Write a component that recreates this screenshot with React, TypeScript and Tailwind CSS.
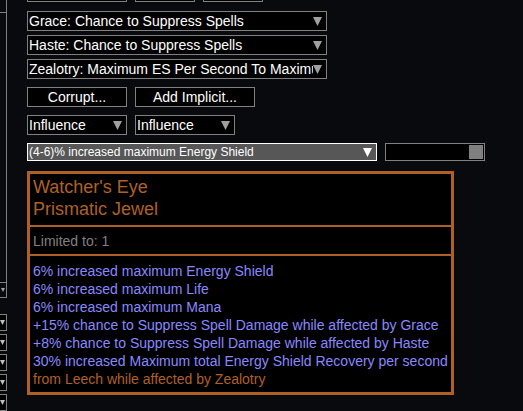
import React from 'react';

const ORANGE = 'text-[#af6025]';

function Arrow({ color = '#a0a0a0' }: { color?: string }) {
  return (
    <svg width="9" height="9" viewBox="0 0 9 9" className="shrink-0">
      <polygon points="0,0 9,0 4.5,9" fill={color} />
    </svg>
  );
}

function Dropdown({ label, className }: { label: string; className: string }) {
  return (
    <div
      className={`h-[20px] border border-[#808080] bg-black flex items-center pl-px pr-[4px] text-[14px] leading-[18px] text-white ${className}`}
    >
      <span className="flex-1 overflow-hidden whitespace-nowrap">{label}</span>
      <Arrow />
    </div>
  );
}

function Button({ label, className }: { label: string; className: string }) {
  return (
    <div
      className={`h-[20px] border border-[#808080] bg-black flex items-center justify-center text-[14px] leading-[18px] text-white ${className}`}
    >
      {label}
    </div>
  );
}

function SideStrip() {
  const boxes = [0, 1, 2, 3, 4];
  return (
    <div className="w-[7px] shrink-0 overflow-hidden flex flex-col">
      <div className="-ml-[24px] w-[31px] h-[311px] border border-t-0 border-[#808080] flex flex-col">
        <div className="h-[12px]" />
        <div className="h-px bg-[#808080]" />
        <div className="flex-1" />
        <div className="h-px bg-[#808080]" />
        <div className="h-[14px] flex items-center justify-end pr-[1px]">
          <svg width="4" height="4" viewBox="0 0 4 4">
            <polygon points="0,0 4,0 2,4" fill="#a0a0a0" />
          </svg>
        </div>
      </div>
      <div className="mt-[16px] flex flex-col gap-[3px]">
        {boxes.map((b) => (
          <div
            key={b}
            className="-ml-[24px] w-[31px] h-[17px] border border-[#808080] bg-black flex items-center justify-end pr-[1px]"
          >
            <svg width="5" height="5" viewBox="0 0 5 5">
              <polygon points="0,0 5,0 2.5,5" fill="#c0c0c0" />
            </svg>
          </div>
        ))}
      </div>
    </div>
  );
}

const mods = [
  '6% increased maximum Energy Shield',
  '6% increased maximum Life',
  '6% increased maximum Mana',
  '+15% chance to Suppress Spell Damage while affected by Grace',
  '+8% chance to Suppress Spell Damage while affected by Haste',
  '30% increased Maximum total Energy Shield Recovery per second',
];

function Tooltip() {
  return (
    <div className="w-[427px] h-[224px] border-[3px] border-[#af6025] bg-black flex flex-col">
      <div className={`pl-[3px] pt-[2px] pb-[5px] text-[18px] leading-[22px] ${ORANGE}`}>
        <div>Watcher's Eye</div>
        <div>Prismatic Jewel</div>
      </div>
      <div className="h-[2px] bg-[#af6025]" />
      <div className="pl-[3px] pt-[5px] pb-[4px] text-[14px] leading-[18px] text-[#808080]">
        Limited to: 1
      </div>
      <div className="h-[2px] bg-[#af6025]" />
      <div className="pl-[3px] pt-[6px] text-[14px] leading-[18px] whitespace-nowrap">
        {mods.map((m) => (
          <div key={m} className="text-[#8888ff]">
            {m}
          </div>
        ))}
        <div className={ORANGE}>from Leech while affected by Zealotry</div>
      </div>
    </div>
  );
}

export default function App() {
  return (
    <div className="w-[523px] h-[411px] overflow-hidden bg-[#090a0d] flex font-['Liberation_Sans',Arial,sans-serif]">
      <SideStrip />
      <div className="ml-[20px] flex flex-col">
        <div className="-mt-[18px] flex gap-[8px]">
          <Button label="" className="w-[100px]" />
          <Button label="" className="w-[60px]" />
          <Button label="" className="w-[60px]" />
        </div>

        <div className="mt-[9px] flex flex-col gap-[4px]">
          <Dropdown label="Grace: Chance to Suppress Spells" className="w-[300px]" />
          <Dropdown label="Haste: Chance to Suppress Spells" className="w-[300px]" />
          <Dropdown label="Zealotry: Maximum ES Per Second To Maximum" className="w-[300px]" />
        </div>

        <div className="mt-[8px] flex gap-[8px]">
          <Button label="Corrupt..." className="w-[100px]" />
          <Button label="Add Implicit..." className="w-[120px]" />
        </div>

        <div className="mt-[8px] flex gap-[8px]">
          <Dropdown label="Influence" className="w-[100px]" />
          <Dropdown label="Influence" className="w-[100px]" />
        </div>

        <div className="mt-[8px] flex gap-[8px]">
          <div className="w-[350px] h-[18px] border border-white bg-[#575757] flex items-center pl-px pr-[4px] text-[12px] leading-[16px] text-white">
            <span className="flex-1 whitespace-nowrap overflow-hidden">
              (4-6)% increased maximum Energy Shield
            </span>
            <Arrow color="#ffffff" />
          </div>
          <div className="w-[100px] h-[18px] border border-[#808080] bg-black flex justify-end p-px">
            <div className="w-[14px] h-full bg-[#808080]" />
          </div>
        </div>

        <div className="mt-[10px]">
          <Tooltip />
        </div>
      </div>
    </div>
  );
}
